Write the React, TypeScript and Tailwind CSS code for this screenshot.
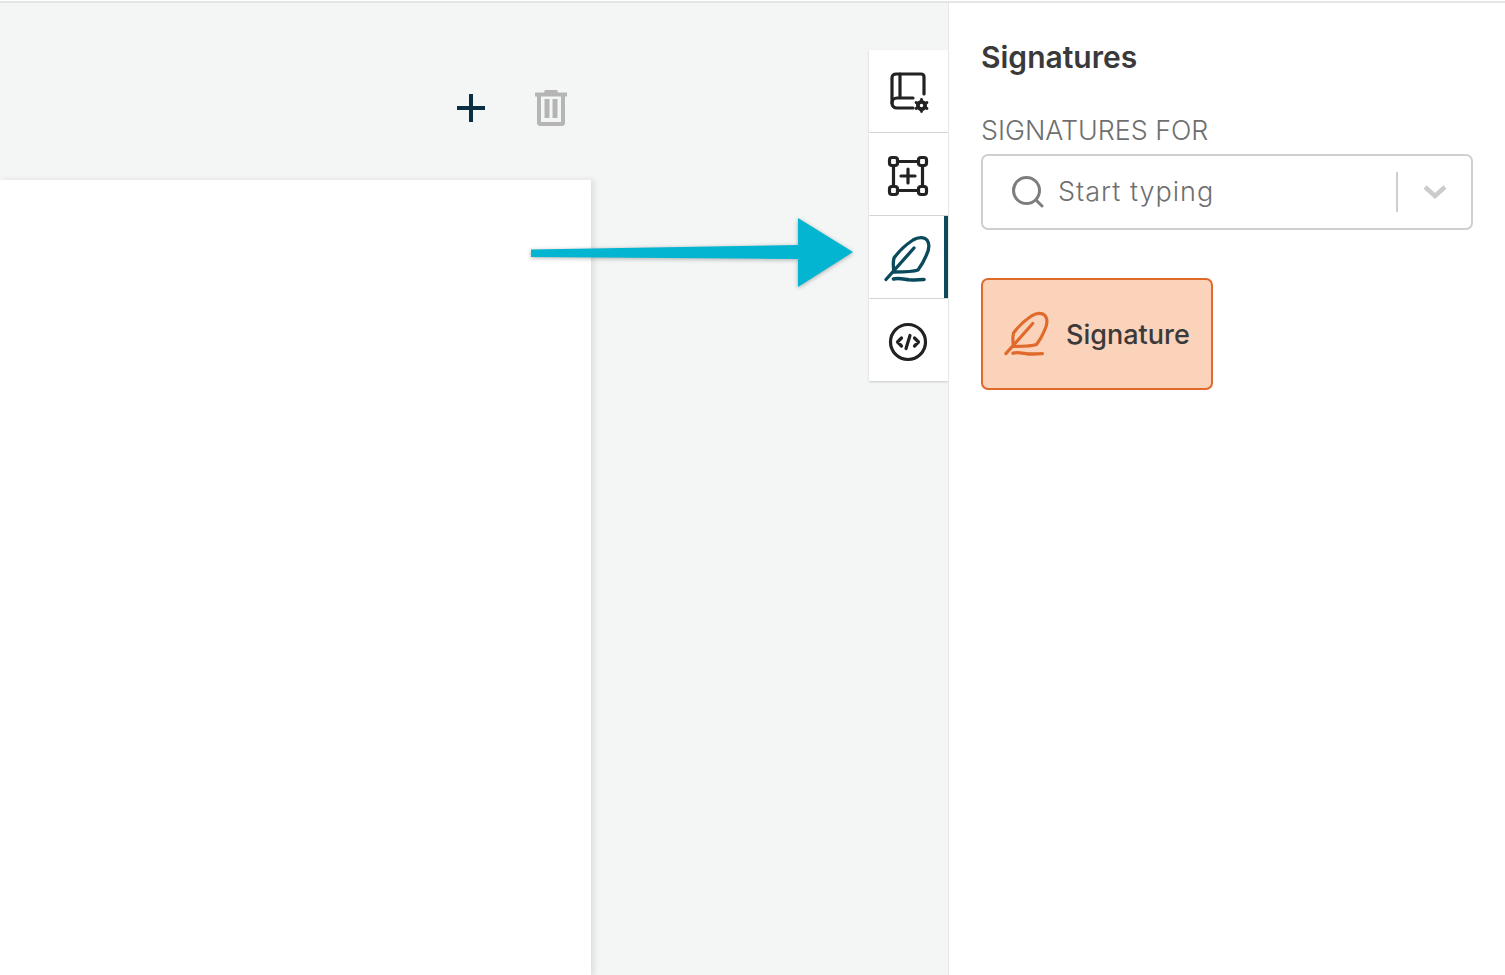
import React from 'react';

function FeatherIcon({ className }: { className: string }) {
  return (
    <svg viewBox="0 0 48 48" fill="none" stroke="currentColor" strokeWidth="3.300" strokeLinecap="round" strokeLinejoin="round" className={className}>
      <path d="M11 37C10 31 10 27 11 23C16 16 24 9 30 5C35 2 41 1.500 44 5C47 9 46 15 43 21C40.500 27 38 31 35 35C31 36.500 18 37 11 37Z" />
      <path d="M3 44.500L31 13" />
      <path d="M10.500 44C15 42.500 20 44 26 44.800C31 45.300 36 44.500 41 44.500" strokeWidth="3.600" />
    </svg>
  );
}

function BookGearIcon() {
  return (
    <svg viewBox="0 0 44 44" fill="none" stroke="currentColor" strokeWidth="3.200" strokeLinecap="round" strokeLinejoin="round" className="w-11 h-11 translate-x-[3px]">
      <path d="M35 23V6C35 4 34 3 32 3H7.500C4.500 3 3 4.500 3 7V32" />
      <path d="M11 3V26" />
      <path d="M24 27H8C5 27 3 29 3 32C3 35 5 37 8 37H24" />
      <circle cx="32.500" cy="34.500" r="3.600" strokeWidth="3.800" />
      <path d="M32.500 28.500V30M32.500 39V40.500M27 31.500L28.500 32.500M36.500 36.500L38 37.500M27 37.500L28.500 36.500M36.500 32.500L38 31.500" strokeWidth="2.800" />
    </svg>
  );
}

function FrameIcon() {
  return (
    <svg viewBox="0 0 44 44" fill="none" stroke="currentColor" strokeWidth="3.200" strokeLinecap="round" strokeLinejoin="round" className="w-11 h-11">
      <rect x="3.500" y="3.500" width="8" height="8" rx="2.500" />
      <rect x="32.500" y="3.500" width="8" height="8" rx="2.500" />
      <rect x="3.500" y="32.500" width="8" height="8" rx="2.500" />
      <rect x="32.500" y="32.500" width="8" height="8" rx="2.500" />
      <path d="M11.500 7.500H32.500M11.500 36.500H32.500M7.500 11.500V32.500M36.500 11.500V32.500" />
      <path d="M22 15V29M15 22H29" />
    </svg>
  );
}

function CodeIcon() {
  return (
    <svg viewBox="0 0 44 44" fill="none" stroke="currentColor" strokeWidth="3.200" strokeLinecap="round" strokeLinejoin="round" className="w-11 h-11">
      <circle cx="22" cy="22" r="17.500" />
      <path d="M15.500 18L11.500 22L15.500 26M28.500 18L32.500 22L28.500 26M24 15.500L20 28.500" />
    </svg>
  );
}

function TrashIcon() {
  return (
    <svg viewBox="0 0 34 38" className="w-[34px] h-[38px] text-[#b5b5b5]" fill="currentColor">
      <path fillRule="evenodd" d="M11 1H23L24 3.500H33V7.500H31V34C31 36 29.500 37 28 37H6C4.500 37 3 36 3 34V7.500H1V3.500H10ZM7 7.500V33H27V7.500Z" />
      <rect x="10.500" y="10" width="5" height="19" />
      <rect x="18.500" y="10" width="5" height="19" />
    </svg>
  );
}

function SideTab({ active, children }: { active?: boolean; children: React.ReactNode }) {
  return (
    <div className={`h-[82px] pt-[3px] bg-white shadow-[0_1px_2px_rgba(0,0,0,0.18)] flex items-center justify-center ${active ? 'border-r-[4px] border-[#0b4a5c] text-[#0b4a5c]' : 'pr-[2px] text-[#222222]'}`}>
      {children}
    </div>
  );
}

export default function App() {
  return (
    <div className="relative h-[975px] w-[1505px] overflow-hidden bg-white font-['Inter','Liberation_Sans',sans-serif]">
      <div className="flex h-full border-t-2 border-[#e4e6e6] mt-px">
        {/* canvas */}
        <div className="w-[948px] flex bg-[#f4f6f6]">
          <div className="w-[591px] flex flex-col">
            <div className="h-[177px] flex items-start justify-end gap-[48px] pr-[23px] pt-[86px]">
              <svg viewBox="0 0 30 30" className="w-[30px] h-[30px] mt-[4px] text-[#0b2f42]" fill="none" stroke="currentColor" strokeWidth="4">
                <path d="M15 1V29M1 15H29" />
              </svg>
              <TrashIcon />
            </div>
            <div className="flex-1 bg-white shadow-[3px_0_6px_rgba(0,0,0,0.1)]" />
          </div>
          <div className="flex-1 flex justify-end pt-[47px]">
            <div className="w-[79px] flex flex-col gap-px self-start">
              <SideTab><BookGearIcon /></SideTab>
              <SideTab><FrameIcon /></SideTab>
              <SideTab active><FeatherIcon className="w-12 h-12" /></SideTab>
              <SideTab><CodeIcon /></SideTab>
            </div>
          </div>
        </div>

        {/* right panel */}
        <div className="flex-1 border-l border-[#e6e8e8] pl-[32px] pr-[32px] pt-[34px]">
          <h2 className="text-[30px] leading-[40px] font-semibold text-[#3a3a3a]">Signatures</h2>
          <div className="mt-[36px] text-[26.800px] leading-[34px] font-light text-[#6f6f6f]">SIGNATURES FOR</div>
          <div className="mt-[7px] h-[76px] border-2 border-[#cfcfcf] rounded-[7px] flex items-center pl-[29px] pr-[24px]">
            <svg viewBox="0 0 32 32" className="w-8 h-8 text-[#7d7d7d]" fill="none" stroke="currentColor" strokeWidth="3" strokeLinecap="round">
              <circle cx="14.500" cy="14.500" r="13" />
              <path d="M24 24L30 30" />
            </svg>
            <span className="ml-[14px] flex-1 text-[27px] tracking-[1px] font-light text-[#6f6f6f]">Start typing</span>
            <div className="w-[2px] h-[40px] bg-[#cfcfcf] mr-[25px]" />
            <svg viewBox="0 0 24 14" className="w-6 h-[14px] text-[#cccccc]" fill="none" stroke="currentColor" strokeWidth="4.500">
              <path d="M2 2L12 11L22 2" />
            </svg>
          </div>
          <div className="mt-[48px] w-[232px] h-[112px] bg-[#fbd2ba] border-2 border-[#e06a2c] rounded-[7px] flex items-center pl-[20px] text-[#e06a2c]">
            <FeatherIcon className="w-[46px] h-[46px]" />
            <span className="ml-[17px] pt-[2px] text-[27px] font-medium text-[#3a3a3a]">Signature</span>
          </div>
        </div>
      </div>

      {/* annotation arrow drawn over the screenshot */}
      <svg viewBox="0 0 330 75" className="absolute left-[528px] top-[215px] w-[330px] h-[75px] drop-shadow-[0_1px_2px_rgba(0,0,0,0.3)]">
        <path fill="#04b5d1" d="M3 34.500L270 30V3L325 37L270 72V44L3 42Z" />
      </svg>
    </div>
  );
}
